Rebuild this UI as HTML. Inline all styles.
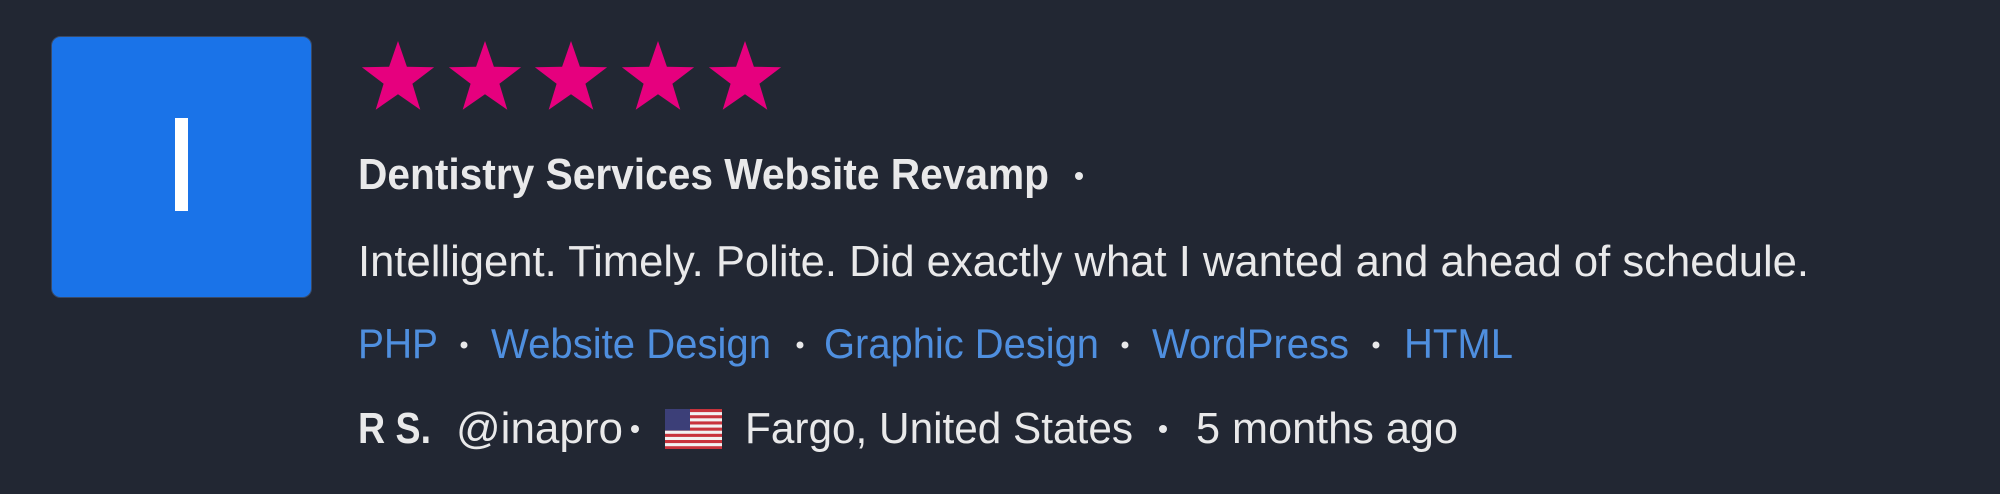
<!DOCTYPE html>
<html><head><meta charset="utf-8"><style>
html,body{margin:0;padding:0;background:#222733;width:2000px;height:494px;overflow:hidden}
svg{display:block}
text{font-family:"Liberation Sans",Arial,sans-serif}
</style></head><body>
<svg width="2000" height="494" viewBox="0 0 2000 494" xmlns="http://www.w3.org/2000/svg">
<rect width="2000" height="494" fill="#222733"/>
<rect x="51.5" y="36.5" width="260" height="261" rx="9" fill="#1a73e8" stroke="#3a4a66" stroke-width="1"/>
<rect x="175" y="118" width="13" height="93" fill="#ffffff"/>
<defs><path id="st" d="M0,-38 L8.9,-12.3 L36.1,-11.7 L14.4,4.7 L22.3,30.7 L0,15.2 L-22.3,30.7 L-14.4,4.7 L-36.1,-11.7 L-8.9,-12.3 Z" fill="#e6007e"/></defs>
<use href="#st" x="398" y="79"/>
<use href="#st" x="485" y="79"/>
<use href="#st" x="571" y="79"/>
<use href="#st" x="658" y="79"/>
<use href="#st" x="745" y="79"/>
<g font-size="44" fill="#e9e9ea">
<text x="358" y="189" font-weight="bold" textLength="691" lengthAdjust="spacingAndGlyphs">Dentistry Services Website Revamp</text>
<circle cx="1079" cy="176" r="4"/>
<text x="358" y="276" textLength="1451" lengthAdjust="spacingAndGlyphs">Intelligent. Timely. Polite. Did exactly what I wanted and ahead of schedule.</text>
</g>
<g font-size="42" fill="#4f8fdf">
<text x="358" y="358" textLength="80" lengthAdjust="spacingAndGlyphs">PHP</text>
<text x="491" y="358" textLength="280" lengthAdjust="spacingAndGlyphs">Website Design</text>
<text x="824" y="358" textLength="275" lengthAdjust="spacingAndGlyphs">Graphic Design</text>
<text x="1152" y="358" textLength="197" lengthAdjust="spacingAndGlyphs">WordPress</text>
<text x="1404" y="358" textLength="109" lengthAdjust="spacingAndGlyphs">HTML</text>
</g>
<g fill="#e9e9ea">
<circle cx="464" cy="345" r="3.5"/><circle cx="800" cy="345" r="3.5"/><circle cx="1125" cy="345" r="3.5"/><circle cx="1376" cy="345" r="3.5"/>
</g>
<g font-size="44" fill="#e9e9ea">
<text x="358" y="443" font-weight="bold" textLength="73" lengthAdjust="spacingAndGlyphs">R S.</text>
<text x="456" y="443" textLength="167" lengthAdjust="spacingAndGlyphs">@inapro</text>
<circle cx="635" cy="429" r="4"/>
<text x="745" y="443" textLength="388" lengthAdjust="spacingAndGlyphs">Fargo, United States</text>
<circle cx="1163" cy="429" r="4"/>
<text x="1196" y="443" textLength="262" lengthAdjust="spacingAndGlyphs">5 months ago</text>
</g>
<g>
<rect x="665" y="409" width="57" height="40" fill="#f2f2f2"/>
<rect x="665" y="409" width="57" height="3.1" fill="#c8333c"/>
<rect x="665" y="415.2" width="57" height="3.1" fill="#c8333c"/>
<rect x="665" y="421.4" width="57" height="3.1" fill="#c8333c"/>
<rect x="665" y="427.6" width="57" height="3.1" fill="#c8333c"/>
<rect x="665" y="433.8" width="57" height="3.1" fill="#c8333c"/>
<rect x="665" y="440" width="57" height="3.1" fill="#c8333c"/>
<rect x="665" y="446.2" width="57" height="2.8" fill="#c8333c"/>
<rect x="665" y="409" width="25" height="21.5" fill="#3c3f78"/>
</g>
</svg>
</body></html>
